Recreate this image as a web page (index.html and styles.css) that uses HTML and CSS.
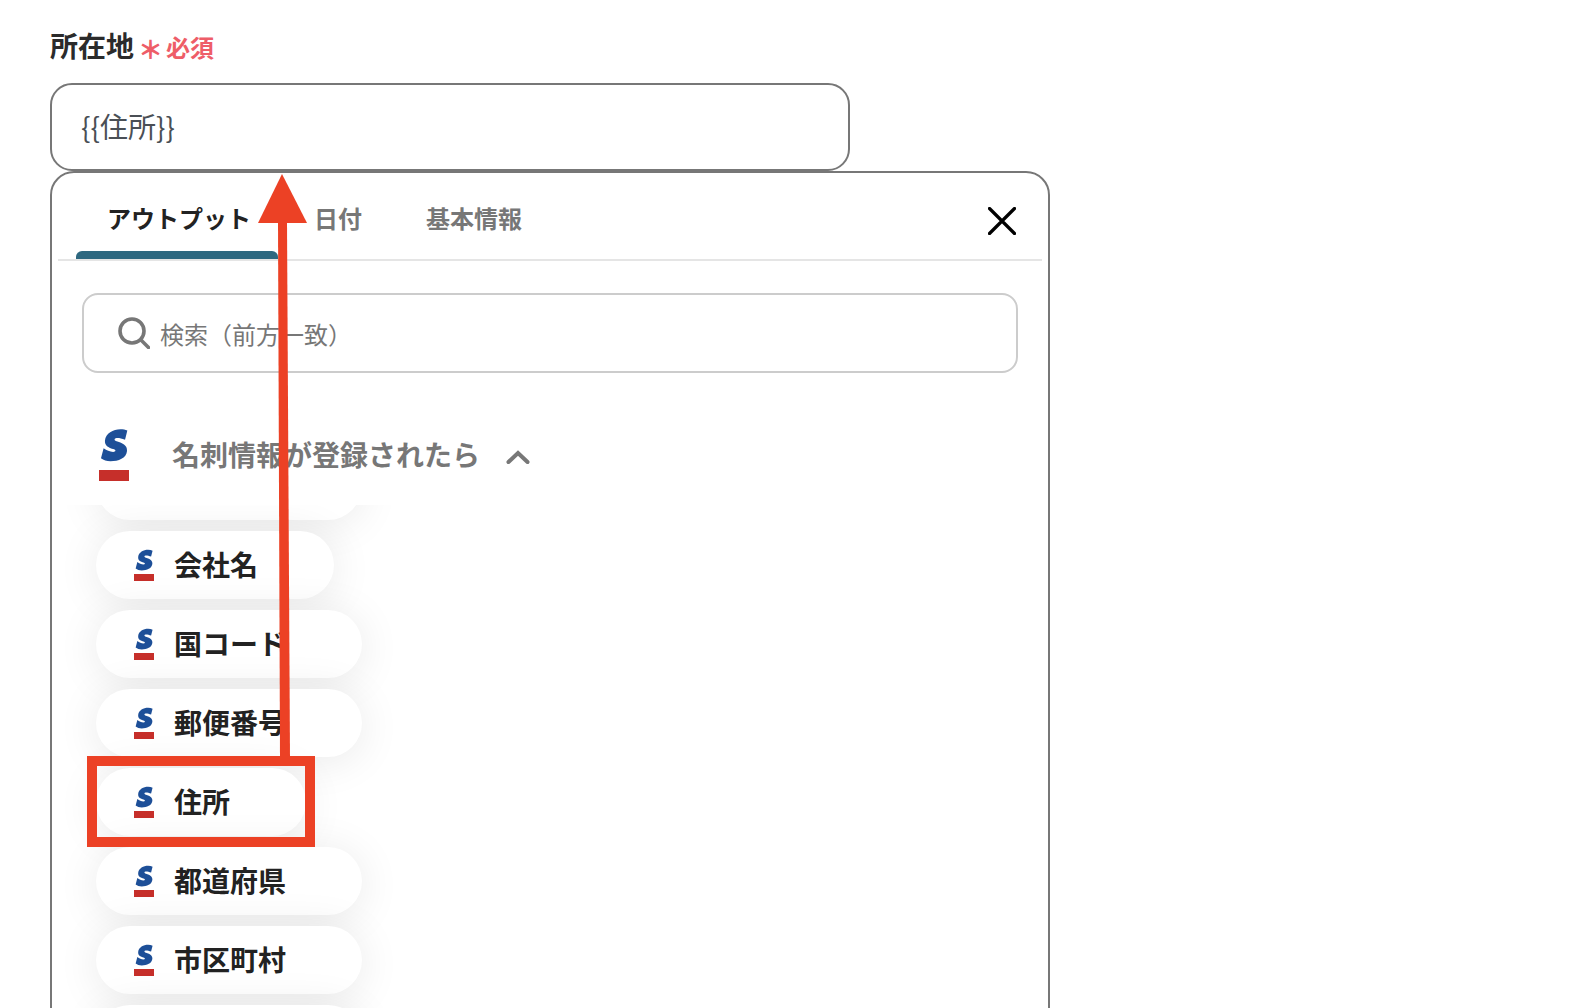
FILE: index.html
```html
<!DOCTYPE html>
<html lang="ja">
<head>
    <meta charset="UTF-8">
    <meta name="viewport" content="width=device-width, initial-scale=1.0">
    <title>所在地</title>
    <link rel="stylesheet" href="styles.css">
</head>
<body>

    <svg class="defs" width="0" height="0">
        <symbol id="logo-s" viewBox="30 25 85 102">
            <path d="M113 32 L106 60 C95 56 86 54 80 55 C74 56 72 61 78 64 C98 70 113 76 112 94 C110 116 86 125 62 125 C50 125 41 122 33 116 L41 86 C50 92 60 97 70 97 C78 97 79 92 73 89 C54 83 44 78 45 62 C47 40 70 28 92 28 C100 28 107 29 113 32 Z"/>
        </symbol>
    </svg>

    <div class="field">
        <div class="field-label">
            <span class="label-text">所在地</span>
            <span class="required-mark">＊</span>
            <span class="required-text">必須</span>
        </div>
        <div class="text-input">{{住所}}</div>

        <div class="popup">
            <div class="tabs">
                <div class="tab active">アウトプット</div>
                <div class="tab tab-date">日付</div>
                <div class="tab tab-basic">基本情報</div>
                <svg class="close-icon" viewBox="0 0 28 28">
                    <path d="M1.5 1.5 L26.5 26.5 M26.5 1.5 L1.5 26.5"/>
                </svg>
            </div>

            <div class="popup-body">
                <div class="search-box">
                    <svg class="search-icon" viewBox="0 0 32 32">
                        <circle cx="14" cy="14" r="12"/>
                        <path d="M23 23 L30.5 30.5"/>
                    </svg>
                    <span>検索（前方一致）</span>
                </div>

                <div class="group-header">
                    <div class="logo-large">
                        <svg class="logo-s"><use href="#logo-s"/></svg>
                        <div class="logo-bar"></div>
                    </div>
                    <span class="group-title">名刺情報が登録されたら</span>
                    <svg class="chevron" viewBox="0 0 24 14">
                        <path d="M2.5 12 L12 3 L21.5 12"/>
                    </svg>
                </div>

                <div class="pill-list">
                    <div class="pill pill-blank"></div>
                    <div class="pill">
                        <div class="logo-small"><svg class="logo-s"><use href="#logo-s"/></svg><div class="logo-bar"></div></div>
                        <span>会社名</span>
                    </div>
                    <div class="pill">
                        <div class="logo-small"><svg class="logo-s"><use href="#logo-s"/></svg><div class="logo-bar"></div></div>
                        <span>国コード</span>
                    </div>
                    <div class="pill">
                        <div class="logo-small"><svg class="logo-s"><use href="#logo-s"/></svg><div class="logo-bar"></div></div>
                        <span>郵便番号</span>
                    </div>
                    <div class="pill">
                        <div class="logo-small"><svg class="logo-s"><use href="#logo-s"/></svg><div class="logo-bar"></div></div>
                        <span>住所</span>
                    </div>
                    <div class="pill">
                        <div class="logo-small"><svg class="logo-s"><use href="#logo-s"/></svg><div class="logo-bar"></div></div>
                        <span>都道府県</span>
                    </div>
                    <div class="pill">
                        <div class="logo-small"><svg class="logo-s"><use href="#logo-s"/></svg><div class="logo-bar"></div></div>
                        <span>市区町村</span>
                    </div>
                    <div class="pill pill-blank"></div>
                </div>
            </div>
        </div>
    </div>

    <!-- red annotation drawn over the screenshot -->
    <svg class="arrow" viewBox="0 0 1582 1008">
        <polygon points="278,222 287,222 290,760 280,760"/>
        <polygon points="282,174 307,223 258,223"/>
    </svg>
    <div class="highlight-box"></div>

</body>
</html>
```

FILE: styles.css
```css
* {
    margin: 0;
    padding: 0;
    box-sizing: border-box;
}
body {
    width: 1582px;
    height: 1008px;
    overflow: hidden;
    background: #fff;
    font-family: "Noto Sans CJK JP", "Noto Sans", sans-serif;
    position: relative;
}
.defs {
    position: absolute;
}
.field {
    padding: 27px 0 0 50px;
    width: 1050px;
}
.field-label {
    display: flex;
    align-items: center;
    height: 36px;
    margin-bottom: 20px;
}
.label-text {
    font-size: 28px;
    font-weight: 700;
    color: #2b2b2b;
}
.required-mark {
    font-size: 25px;
    font-weight: 900;
    color: #ee5d68;
    margin: 6px 0 0 4px;
}
.required-text {
    font-size: 24px;
    font-weight: 700;
    color: #ee5d68;
    margin: 2px 0 0 3px;
}
.text-input {
    width: 800px;
    height: 88px;
    border: 2px solid #777;
    border-radius: 22px;
    padding: 0 0 3px 29px;
    display: flex;
    align-items: center;
    font-size: 28px;
    color: #4a4f55;
}
.popup {
    width: 1000px;
    height: 900px;
    border: 2px solid #777;
    border-radius: 24px;
    padding: 0 6px;
    background: #fff;
}
.tabs {
    display: flex;
    height: 88px;
    padding-left: 18px;
    border-bottom: 2px solid #e5e5e5;
    position: relative;
}
.tab {
    width: 202px;
    height: 86px;
    padding-top: 25px;
    text-align: center;
    font-size: 24px;
    font-weight: 700;
    line-height: 40px;
    color: #777;
}
.tab.active {
    color: #222;
    padding-left: 4px;
    position: relative;
}
.tab.active::after {
    content: "";
    position: absolute;
    left: 0;
    right: 0;
    bottom: 0;
    height: 8px;
    background: #2e6880;
    border-radius: 6px 6px 0 0;
}
.tab-date {
    width: 48px;
    margin-left: 36px;
}
.tab-basic {
    width: 96px;
    margin-left: 64px;
}
.close-icon {
    position: absolute;
    top: 34px;
    right: 26px;
    width: 28px;
    height: 28px;
    fill: none;
    stroke: #000;
    stroke-width: 3.2;
    stroke-linecap: round;
}
.popup-body {
    padding: 32px 24px 0 24px;
}
.search-box {
    height: 80px;
    border: 2px solid #ccc;
    border-radius: 16px;
    padding-left: 34px;
    display: flex;
    align-items: center;
    gap: 10px;
    font-size: 24px;
    color: #777;
}
.search-icon {
    width: 32px;
    height: 32px;
    fill: none;
    stroke: #777;
    stroke-width: 3.6;
    stroke-linecap: round;
}
.group-header {
    height: 132px;
    display: flex;
    align-items: center;
    background: #fff;
    position: relative;
    z-index: 2;
    margin: 0 -24px;
    padding: 30px 0 0 41px;
}
.logo-large {
    width: 30px;
    margin-top: 1px;
}
.logo-large .logo-s {
    display: block;
    width: 28px;
    height: 34px;
    margin: 0 0 8px 1px;
}
.logo-large .logo-bar {
    height: 11px;
}
.logo-s {
    fill: #1d4f98;
}
.logo-bar {
    background: #c62f2a;
}
.group-title {
    margin-left: 43px;
    font-size: 28px;
    font-weight: 700;
    color: #777;
}
.chevron {
    width: 24px;
    height: 14px;
    margin: 5px 0 0 26px;
    fill: none;
    stroke: #777;
    stroke-width: 4;
    stroke-linecap: round;
}
.pill-list {
    display: flex;
    flex-direction: column;
    align-items: flex-start;
    gap: 11px;
    margin: -53px 0 0 14px;
}
.pill {
    height: 68px;
    padding: 0 76px 0 38px;
    display: flex;
    align-items: center;
    gap: 20px;
    background: #fff;
    border-radius: 34px;
    box-shadow: 0 4px 44px rgba(0, 0, 0, 0.09);
    font-size: 28px;
    font-weight: 700;
    color: #222;
}
.pill span {
    margin-bottom: 2px;
}
.pill-blank {
    width: 266px;
}
.logo-small {
    width: 20px;
}
.logo-small .logo-s {
    display: block;
    width: 18px;
    height: 22px;
    margin: 0 0 3px 1px;
}
.logo-small .logo-bar {
    height: 7px;
}
.arrow {
    position: absolute;
    top: 0;
    left: 0;
    width: 1582px;
    height: 1008px;
    fill: #ec4125;
    z-index: 5;
}
.highlight-box {
    position: absolute;
    left: 87px;
    top: 756px;
    width: 228px;
    height: 91px;
    border: 10px solid #ec4125;
    z-index: 5;
}
```
